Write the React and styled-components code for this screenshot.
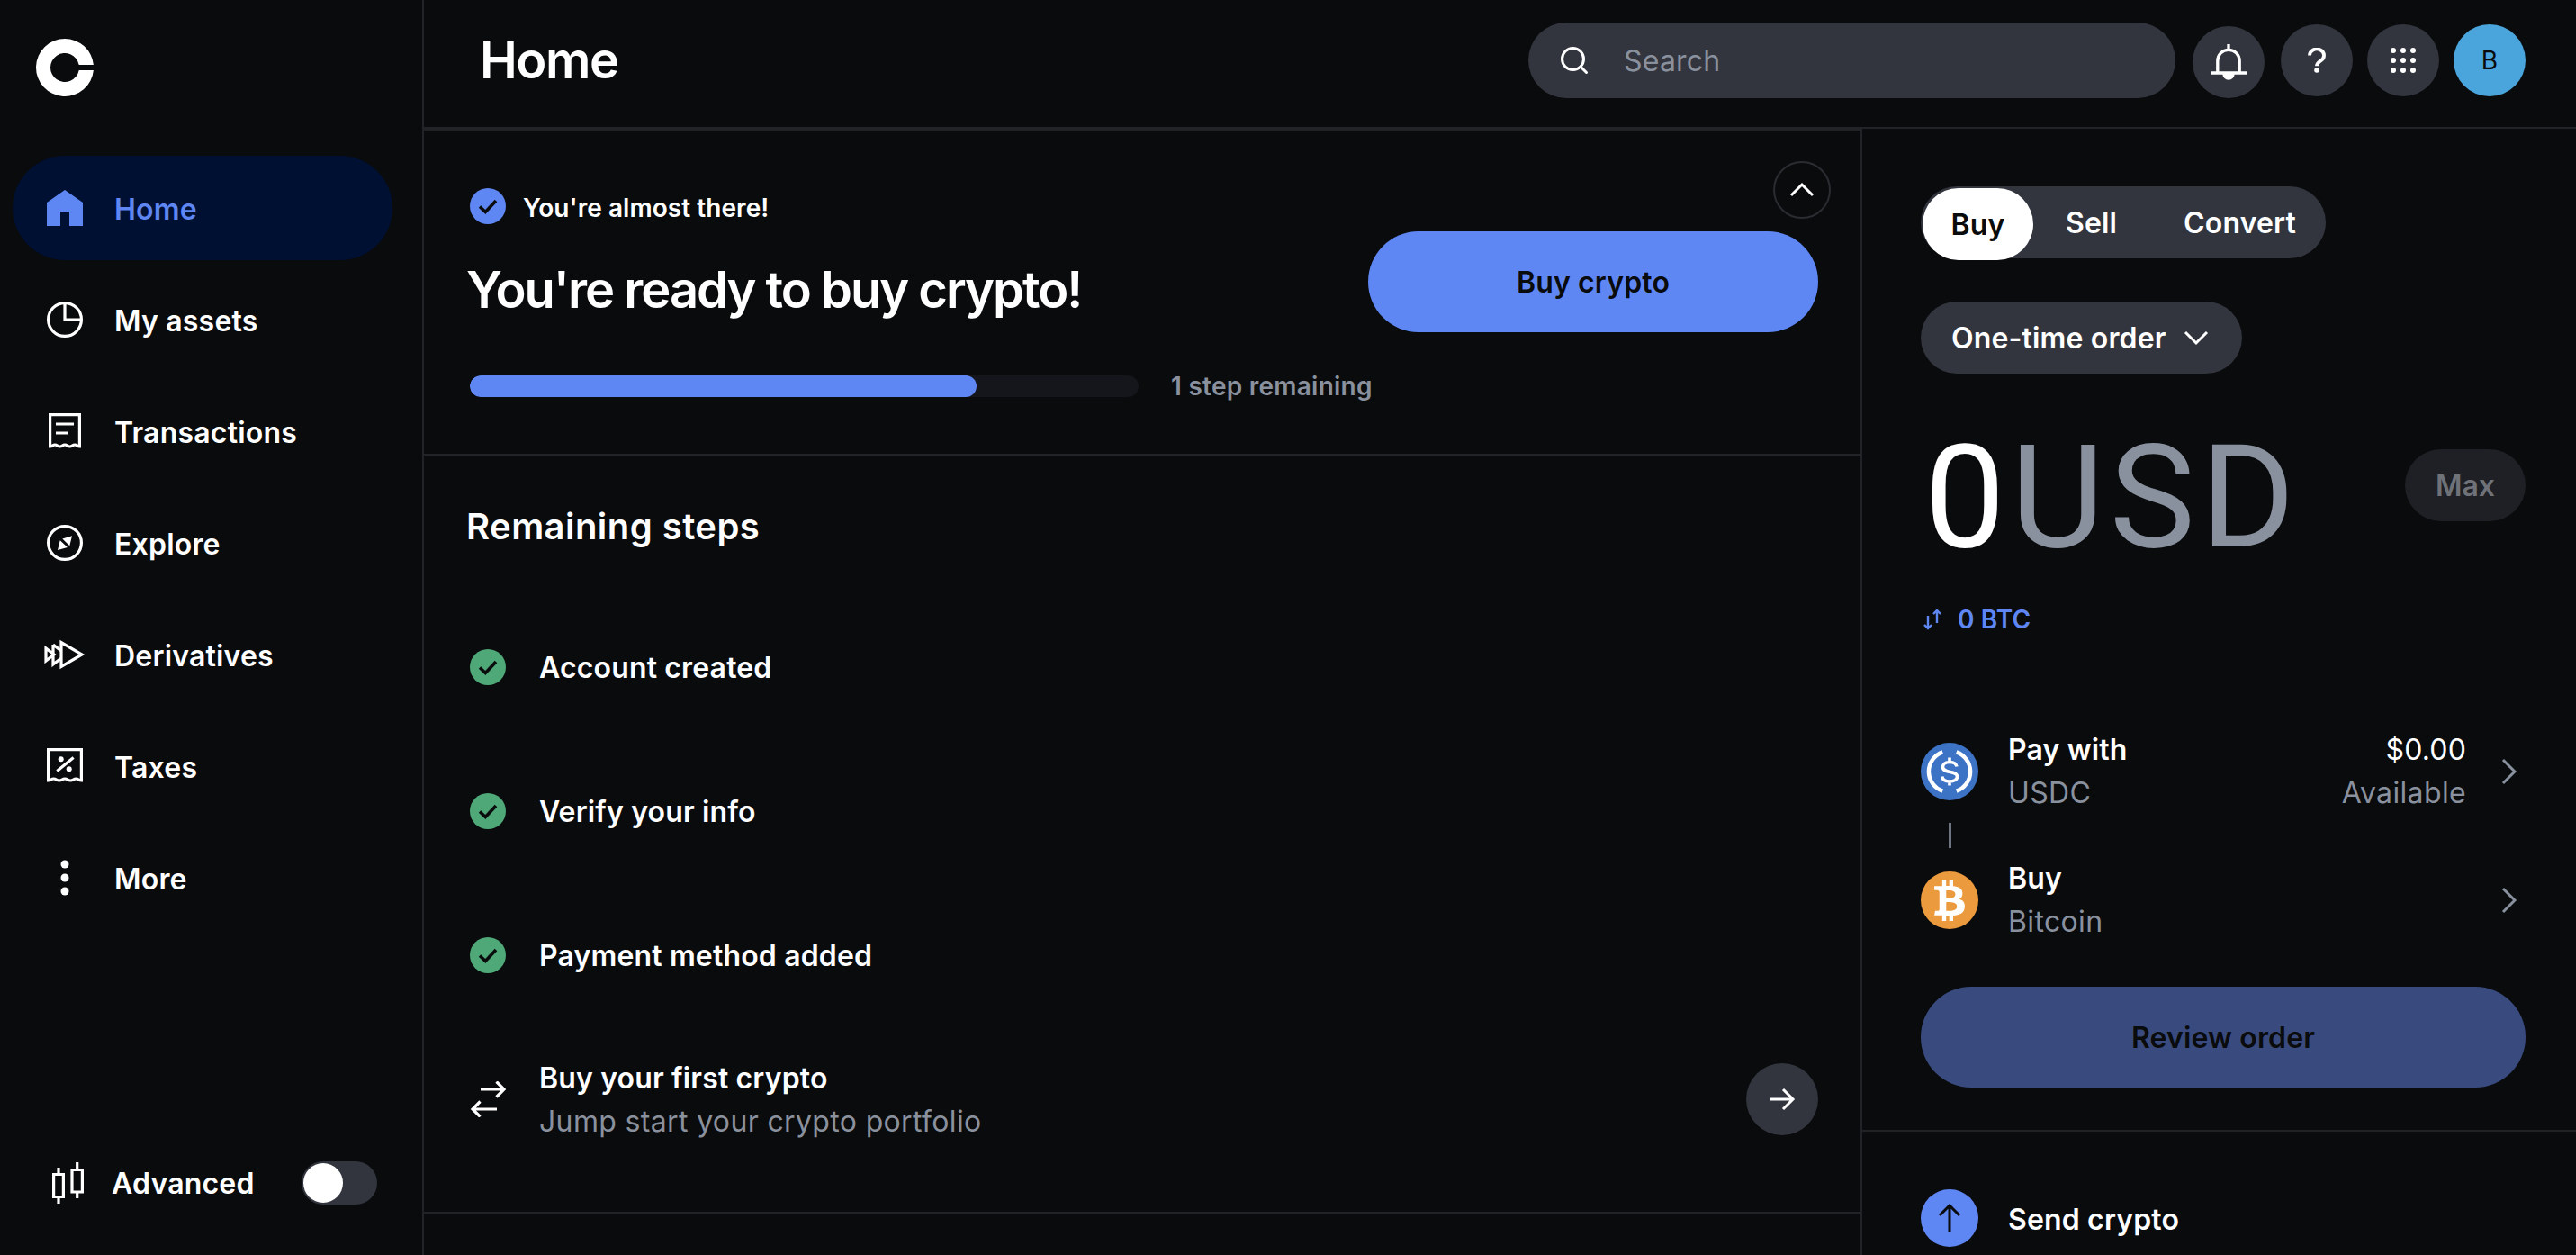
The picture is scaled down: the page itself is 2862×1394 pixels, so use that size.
import React from "react";
import styled, { createGlobalStyle } from "styled-components";
import { Search } from "lucide-react";
import { FaBtc } from "react-icons/fa";

const GlobalStyle = createGlobalStyle`
  html, body {
    margin: 0;
    padding: 0;
    background: #0a0b0d;
  }
  * {
    box-sizing: border-box;
  }
`;

const BLUE = "#5f87f4";
const GRAY = "#8a919e";
const LINE = "#212327";
const CHIP = "#32353e";

const Page = styled.div`
  display: flex;
  width: 2862px;
  height: 1394px;
  overflow: hidden;
  background: #0a0b0d;
  color: #fff;
  font-family: Inter, "Liberation Sans", sans-serif;
`;

const Sidebar = styled.aside`
  flex: 0 0 471px;
  display: flex;
  flex-direction: column;
  border-right: 2px solid ${LINE};
  padding: 43px 33px 56px 14px;
`;

const LogoWrap = styled.div`
  height: 64px;
  margin: 0 0 66px 26px;
`;

const Nav = styled.nav`
  display: flex;
  flex-direction: column;
  gap: 8px;
`;

const NavItem = styled.div`
  height: 116px;
  display: flex;
  align-items: center;
  gap: 35px;
  padding-left: 38px;
  border-radius: 58px;
  font-size: 32px;
  font-weight: 600;
  letter-spacing: 0.2px;
  color: ${(p) => (p.$active ? BLUE : "#fff")};
  background: ${(p) => (p.$active ? "#001033" : "transparent")};
`;

const NavLabel = styled.span`
  margin-top: 3px;
`;

const NavIcon = styled.svg`
  width: 40px;
  height: 40px;
  flex: none;
  overflow: visible;
`;

const AdvancedRow = styled.div`
  margin-top: auto;
  display: flex;
  align-items: center;
  padding-left: 44px;
  font-size: 32px;
  font-weight: 600;
  letter-spacing: 0.2px;
`;

const AdvancedLabel = styled.span`
  margin-left: 31px;
`;

const Toggle = styled.div`
  margin-left: 52px;
  width: 84px;
  height: 48px;
  border-radius: 24px;
  background: ${CHIP};
  padding: 2px;
`;

const Knob = styled.div`
  width: 44px;
  height: 44px;
  border-radius: 50%;
  background: #fff;
`;

const Content = styled.div`
  flex: 1;
  display: flex;
  flex-direction: column;
  min-width: 0;
`;

const Header = styled.header`
  flex: 0 0 143px;
  display: flex;
  align-items: center;
  padding: 0 56px 7px 62px;
  border-bottom: 2px solid ${LINE};
`;

const PageTitle = styled.h1`
  margin: 0;
  font-size: 56px;
  font-weight: 600;
  letter-spacing: -1.4px;
`;

const SearchBox = styled.div`
  margin-left: auto;
  width: 719px;
  height: 84px;
  border-radius: 42px;
  background: ${CHIP};
  display: flex;
  align-items: center;
  gap: 37px;
  padding-left: 33px;
  font-size: 32px;
  letter-spacing: 0.2px;
  color: ${GRAY};
`;

const RoundButton = styled.div`
  width: 80px;
  height: 80px;
  margin-left: ${(p) => p.$gap || 16}px;
  margin-top: ${(p) => p.$drop || 0}px;
  border-radius: 50%;
  background: ${(p) => p.$bg || CHIP};
  color: ${(p) => p.$color || "#fff"};
  display: flex;
  align-items: center;
  justify-content: center;
  font-size: 28px;
  flex: none;
`;

const Columns = styled.div`
  flex: 1;
  display: flex;
  min-height: 0;
`;

const Center = styled.main`
  flex: 0 0 1598px;
  border-right: 2px solid ${LINE};
  display: flex;
  flex-direction: column;
`;

const Banner = styled.section`
  position: relative;
  height: 363px;
  padding: 64px 47px 0 47px;
  border-top: 2px solid ${LINE};
  border-bottom: 2px solid ${LINE};
`;

const CollapseButton = styled.div`
  position: absolute;
  top: 34px;
  right: 33px;
  width: 64px;
  height: 64px;
  border-radius: 50%;
  border: 2px solid #2a2c31;
  display: flex;
  align-items: center;
  justify-content: center;
`;

const Eyebrow = styled.div`
  display: flex;
  align-items: center;
  gap: 19px;
  padding-left: 4px;
  font-size: 28px;
  font-weight: 600;
  letter-spacing: 0.05px;
`;

const EyebrowLabel = styled.span`
  margin-top: 3px;
`;

const BannerMain = styled.div`
  display: flex;
  justify-content: space-between;
  align-items: flex-start;
  margin-top: 8px;
`;

const BannerTitle = styled.h2`
  margin: 31px 0 0;
  font-size: 56px;
  font-weight: 600;
  letter-spacing: -2px;
`;

const PrimaryButton = styled.div`
  height: 112px;
  width: ${(p) => p.$width || "500px"};
  border-radius: 56px;
  background: ${(p) => p.$bg || BLUE};
  color: #0a0b0d;
  display: flex;
  align-items: center;
  justify-content: center;
  font-size: 32px;
  font-weight: 600;
  letter-spacing: 0.15px;
`;

const ProgressRow = styled.div`
  display: flex;
  align-items: center;
  gap: 36px;
  margin: 43px 0 0 4px;
  font-size: 28px;
  font-weight: 600;
  letter-spacing: 0.25px;
  color: ${GRAY};
`;

const Track = styled.div`
  width: 743px;
  height: 24px;
  border-radius: 12px;
  background: #14161b;
  overflow: hidden;
`;

const Fill = styled.div`
  height: 100%;
  border-radius: 12px;
  background: ${BLUE};
`;

const Steps = styled.section`
  height: 842px;
  padding: 0 47px 0 47px;
  border-bottom: 2px solid ${LINE};
  display: flex;
  flex-direction: column;
`;

const StepsTitle = styled.h3`
  margin: 53px 0 0;
  height: 52px;
  line-height: 52px;
  font-size: 40px;
  font-weight: 600;
  letter-spacing: 0.45px;
`;

const StepList = styled.div`
  margin-top: 50px;
`;

const StepRow = styled.div`
  height: 160px;
  display: flex;
  align-items: center;
  gap: 37px;
  padding-left: 4px;
  font-size: 32px;
  font-weight: 600;
  letter-spacing: 0.15px;
`;

const StepText = styled.div`
  flex: 1;
  display: flex;
  flex-direction: column;
  gap: 9px;
  line-height: 39px;
`;

const Muted = styled.span`
  font-weight: 400;
  letter-spacing: 0.35px;
  color: ${GRAY};
`;

const Aside = styled.aside`
  flex: 1;
  min-width: 0;
  display: flex;
  flex-direction: column;
`;

const OrderPanel = styled.section`
  height: 1114px;
  padding: 64px 56px 0 65px;
  border-bottom: 2px solid ${LINE};
`;

const Tabs = styled.div`
  width: 450px;
  height: 80px;
  border-radius: 40px;
  background: ${CHIP};
  display: flex;
  align-items: center;
  font-size: 32px;
  font-weight: 600;
  letter-spacing: 0.15px;
`;

const Tab = styled.div`
  height: ${(p) => (p.$active ? "80px" : "auto")};
  width: ${(p) => (p.$active ? "123px" : "auto")};
  margin-left: ${(p) => p.$offset}px;
  margin-top: ${(p) => (p.$active ? "4px" : "0")};
  border-radius: 40px;
  display: flex;
  align-items: center;
  justify-content: center;
  background: ${(p) => (p.$active ? "#fff" : "transparent")};
  color: ${(p) => (p.$active ? "#0a0b0d" : "#fff")};
`;

const OrderType = styled.div`
  margin-top: 48px;
  width: 357px;
  height: 80px;
  border-radius: 40px;
  background: ${CHIP};
  display: flex;
  align-items: center;
  gap: 19px;
  padding-left: 34px;
  font-size: 32px;
  font-weight: 600;
  letter-spacing: 0.15px;
`;

const AmountRow = styled.div`
  display: flex;
  align-items: flex-start;
  justify-content: space-between;
  margin-top: 64px;
  height: 140px;
`;

const Amount = styled.div`
  font-family: Roboto, Inter, sans-serif;
  font-size: 160px;
  font-weight: 400;
  line-height: 140px;
  letter-spacing: 6px;
  color: #8a919e;
  padding: 4px 0 0 4px;
`;

const AmountValue = styled.span`
  color: #fff;
`;

const MaxButton = styled.div`
  width: 134px;
  height: 80px;
  margin-top: 20px;
  border-radius: 40px;
  background: #1e2025;
  color: #6f7278;
  display: flex;
  align-items: center;
  justify-content: center;
  font-size: 32px;
  font-weight: 600;
`;

const ConvertRow = styled.div`
  margin-top: 52px;
  display: flex;
  align-items: center;
  gap: 18px;
  padding-left: 3px;
  color: ${BLUE};
  font-size: 28px;
  font-weight: 600;
  letter-spacing: 0.1px;
`;

const AssetRow = styled.div`
  display: flex;
  align-items: center;
  margin-top: ${(p) => p.$top}px;
`;

const AssetIcon = styled.svg`
  width: 64px;
  height: 64px;
  flex: none;
`;

const CoinCircle = styled.div`
  width: 64px;
  height: 64px;
  flex: none;
  border-radius: 50%;
  background: ${(p) => p.$bg};
  color: #fff;
  display: flex;
  align-items: center;
  justify-content: center;
`;

const AssetText = styled.div`
  margin-left: 33px;
  flex: 1;
  display: flex;
  flex-direction: column;
  gap: 9px;
  line-height: 39px;
  font-size: 32px;
  font-weight: 600;
  letter-spacing: 0.15px;
`;

const AssetValue = styled(AssetText)`
  flex: none;
  margin-left: 0;
  text-align: right;
  font-weight: 400;
`;

const ChevronBox = styled.svg`
  width: 24px;
  height: 32px;
  margin-left: 36px;
  margin-right: 6px;
  flex: none;
`;

const Connector = styled.div`
  width: 3px;
  height: 28px;
  margin: 14px 0 14px 31px;
  background: #6f7682;
`;

const ReviewWrap = styled.div`
  margin-top: 53px;
`;

const SendRow = styled.div`
  display: flex;
  align-items: center;
  gap: 33px;
  padding: 64px 0 0 65px;
  font-size: 32px;
  font-weight: 600;
  letter-spacing: 0.15px;
`;

const SendLabel = styled.span`
  margin-top: 3px;
`;

const Logo = () => (
  <svg width="64" height="64" viewBox="0 0 64 64">
    <path
      fill="#fff"
      d="M32 0a32 32 0 0 1 31.860 29H47.700A16 16 0 1 0 47.700 35h16.160A32 32 0 1 1 32 0z"
    />
  </svg>
);

const HomeIcon = () => (
  <NavIcon viewBox="0 0 40 40">
    <path fill={BLUE} d="M20 0 40 14V40H25V24H15v16H0V14z" />
  </NavIcon>
);

const AssetsIcon = () => (
  <NavIcon viewBox="0 0 40 40" fill="none" stroke="#fff" strokeWidth="3.2">
    <circle cx="20" cy="20" r="18.4" />
    <path d="M20 2v18h18" />
  </NavIcon>
);

const ReceiptIcon = () => (
  <NavIcon viewBox="0 0 40 40" fill="none" stroke="#fff" strokeWidth="3.2">
    <path d="M3.600 37V1.600h32.800V37c-2.700 0-2.700-2-5.400-2s-2.800 2-5.500 2-2.800-2-5.500-2-2.800 2-5.500 2-2.800-2-5.500-2-2.700 2-5.400 2z" />
    <path d="M10 12h20M10 22h13" />
  </NavIcon>
);

const CompassIcon = () => (
  <NavIcon viewBox="0 0 40 40">
    <circle cx="20" cy="20" r="18.4" fill="none" stroke="#fff" strokeWidth="3.2" />
    <path fill="#fff" d="M28 12.300 25.300 23.300 17.300 15.600zM12 28 14.700 17.300 23 25z" />
  </NavIcon>
);

const DerivativesIcon = () => (
  <NavIcon viewBox="0 0 40 40" fill="none" stroke="#fff" strokeWidth="3.2">
    <path d="M-1 13v14l9-7zM7 9v22l9-7M7 9l9 7M16 6.500v27L39 20z" />
  </NavIcon>
);

const TaxesIcon = () => (
  <NavIcon viewBox="0 0 40 40" fill="none" stroke="#fff" strokeWidth="3.2">
    <path d="M1.600 36V1.600h36.800V36c-3 0-3-2-6-2s-3.100 2-6.200 2-3.100-2-6.200-2-3.100 2-6.200 2-3.100-2-6.200-2-3 2-6 2z" />
    <path d="M11.300 25.600 29.600 10.600" />
    <circle cx="15.700" cy="12.300" r="3" fill="#fff" stroke="none" />
    <circle cx="24.700" cy="23.300" r="3" fill="#fff" stroke="none" />
  </NavIcon>
);

const MoreIcon = () => (
  <NavIcon viewBox="0 0 40 40" fill="#fff">
    <circle cx="20" cy="5" r="4.500" />
    <circle cx="20" cy="20" r="4.500" />
    <circle cx="20" cy="35" r="4.500" />
  </NavIcon>
);

const CandlesIcon = () => (
  <svg width="35" height="46" viewBox="0 0 35 46" fill="none" stroke="#fff" strokeWidth="3.2">
    <path d="M1.600 13.500h10.800v25H1.600zM7 6v7.500M7 38.500V46M22 8.500h11.400v24.500H22zM27.700 0v8.500M27.700 33v7" />
  </svg>
);

const Check = ({ bg }) => (
  <svg width="40" height="40" viewBox="0 0 40 40" style={{ flex: "none" }}>
    <circle cx="20" cy="20" r="20" fill={bg} />
    <path d="M11 20.500 17.300 26.500 29 14" fill="none" stroke="#0a0b0d" strokeWidth="3.6" />
  </svg>
);

const SwapIcon = () => (
  <svg width="40" height="40" viewBox="0 0 40 40" fill="none" stroke="#fff" strokeWidth="3.2" style={{ flex: "none" }}>
    <path d="M12 9h26M29.500 0.500 38 9l-8.500 8.500M30 31H3M11.500 22.500 3 31l8.500 8.500" />
  </svg>
);

const Usdc = () => (
  <AssetIcon viewBox="0 0 64 64">
    <circle cx="32" cy="32" r="32" fill="#3d73c5" />
    <path d="M24.300 10.300A23 23 0 0 0 24.300 53.700M39.700 10.300A23 23 0 0 1 39.700 53.700" fill="none" stroke="#fff" strokeWidth="4.500" />
    <path d="M40 26.500c-.5-3-3.500-5-8-5s-7.500 2.500-7.500 5.500c0 7.500 16 3.500 16 10.500 0 3.500-3.500 5.500-8.500 5.500s-7.800-2-8.300-5.500M32 16.500v5M32 43v4.500" fill="none" stroke="#fff" strokeWidth="3.600" />
  </AssetIcon>
);

const Chevron = () => (
  <ChevronBox viewBox="0 0 24 32" fill="none" stroke="#8a919e" strokeWidth="3">
    <path d="M5 3l13 13L5 29" />
  </ChevronBox>
);

const NAV = [
  { label: "Home", icon: <HomeIcon />, active: true },
  { label: "My assets", icon: <AssetsIcon /> },
  { label: "Transactions", icon: <ReceiptIcon /> },
  { label: "Explore", icon: <CompassIcon /> },
  { label: "Derivatives", icon: <DerivativesIcon /> },
  { label: "Taxes", icon: <TaxesIcon /> },
  { label: "More", icon: <MoreIcon /> },
];

const DONE = ["Account created", "Verify your info", "Payment method added"];

const App = () => {
  return (
    <>
      <GlobalStyle />
      <Page>
        <Sidebar>
          <LogoWrap>
            <Logo />
          </LogoWrap>
          <Nav>
            {NAV.map((item) => (
              <NavItem key={item.label} $active={item.active}>
                {item.icon}
                <NavLabel>{item.label}</NavLabel>
              </NavItem>
            ))}
          </Nav>
          <AdvancedRow>
            <CandlesIcon />
            <AdvancedLabel>Advanced</AdvancedLabel>
            <Toggle>
              <Knob />
            </Toggle>
          </AdvancedRow>
        </Sidebar>
        <Content>
          <Header>
            <PageTitle>Home</PageTitle>
            <SearchBox>
              <Search size={36} color="#fff" strokeWidth={2} />
              Search
            </SearchBox>
            <RoundButton $gap={19} $drop={4}>
              <svg width="40" height="40" viewBox="0 0 40 40" fill="none" stroke="#fff" strokeWidth="3.3">
                <path d="M20 0v6M7.800 32V18.500a12.200 12.200 0 0 1 24.400 0V32M0 32h40" />
                <path d="M13.300 33a6.700 6.700 0 0 0 13.400 0z" fill="#fff" stroke="none" />
              </svg>
            </RoundButton>
            <RoundButton $gap={18}>
              <svg width="20" height="28" viewBox="0 0 20 28" fill="none" stroke="#fff" strokeWidth="3.8">
                <path d="M2 8.500a8 7 0 1 1 12.500 5.800c-2.500 1.600-4.500 2.700-4.500 6" />
                <circle cx="10" cy="25" r="2.800" fill="#fff" stroke="none" />
              </svg>
            </RoundButton>
            <RoundButton>
              <svg width="30" height="30" viewBox="0 0 30 30" fill="#fff">
                {[4, 15, 26].flatMap((y) =>
                  [4, 15, 26].map((x) => <circle key={`${x}-${y}`} cx={x} cy={y} r="3" />)
                )}
              </svg>
            </RoundButton>
            <RoundButton $bg="#4aa5dc" $color="#0a0b0d">B</RoundButton>
          </Header>
          <Columns>
            <Center>
              <Banner>
                <CollapseButton>
                  <svg width="28" height="28" viewBox="0 0 28 28" fill="none" stroke="#fff" strokeWidth="3">
                    <path d="M2 20 14 8l12 12" />
                  </svg>
                </CollapseButton>
                <Eyebrow>
                  <Check bg={BLUE} />
                  <EyebrowLabel>You're almost there!</EyebrowLabel>
                </Eyebrow>
                <BannerMain>
                  <BannerTitle>You're ready to buy crypto!</BannerTitle>
                  <PrimaryButton>Buy crypto</PrimaryButton>
                </BannerMain>
                <ProgressRow>
                  <Track>
                    <Fill style={{ width: "75.8%" }} />
                  </Track>
                  1 step remaining
                </ProgressRow>
              </Banner>
              <Steps>
                <StepsTitle>Remaining steps</StepsTitle>
                <StepList>
                  {DONE.map((s) => (
                    <StepRow key={s}>
                      <Check bg="#4fa878" />
                      {s}
                    </StepRow>
                  ))}
                  <StepRow>
                    <SwapIcon />
                    <StepText>
                      Buy your first crypto
                      <Muted>Jump start your crypto portfolio</Muted>
                    </StepText>
                    <RoundButton>
                      <svg width="32" height="32" viewBox="0 0 32 32" fill="none" stroke="#fff" strokeWidth="3">
                        <path d="M3 16h25M17 5l11 11-11 11" />
                      </svg>
                    </RoundButton>
                  </StepRow>
                </StepList>
              </Steps>
            </Center>
            <Aside>
              <OrderPanel>
                <Tabs>
                  <Tab $active $offset={2}>Buy</Tab>
                  <Tab $offset={36}>Sell</Tab>
                  <Tab $offset={74}>Convert</Tab>
                </Tabs>
                <OrderType>
                  One-time order
                  <svg width="28" height="28" viewBox="0 0 28 28" fill="none" stroke="#fff" strokeWidth="3">
                    <path d="M2 8l12 12L26 8" />
                  </svg>
                </OrderType>
                <AmountRow>
                  <Amount>
                    <AmountValue>0</AmountValue>USD
                  </Amount>
                  <MaxButton>Max</MaxButton>
                </AmountRow>
                <ConvertRow>
                  <svg width="20" height="24" viewBox="0 0 20 24" fill="none" stroke={BLUE} strokeWidth="2.4">
                    <path d="M5 8v14M1 18l4 4 4-4M15 16V2M11 6l4-4 4 4" />
                  </svg>
                  0 BTC
                </ConvertRow>
                <AssetRow $top={108}>
                  <Usdc />
                  <AssetText>
                    Pay with
                    <Muted>USDC</Muted>
                  </AssetText>
                  <AssetValue>
                    $0.00
                    <Muted>Available</Muted>
                  </AssetValue>
                  <Chevron />
                </AssetRow>
                <Connector />
                <AssetRow $top={0}>
                  <CoinCircle $bg="#ec9a3e">
                    <FaBtc size={46} />
                  </CoinCircle>
                  <AssetText>
                    Buy
                    <Muted>Bitcoin</Muted>
                  </AssetText>
                  <Chevron />
                </AssetRow>
                <ReviewWrap>
                  <PrimaryButton $width="672px" $bg="#394b7e">Review order</PrimaryButton>
                </ReviewWrap>
              </OrderPanel>
              <SendRow>
                <AssetIcon viewBox="0 0 64 64">
                  <circle cx="32" cy="32" r="32" fill={BLUE} />
                  <path d="M32 47V18M21 29l11-11 11 11" fill="none" stroke="#0a0b0d" strokeWidth="3" />
                </AssetIcon>
                <SendLabel>Send crypto</SendLabel>
              </SendRow>
            </Aside>
          </Columns>
        </Content>
      </Page>
    </>
  );
};

export default App;
